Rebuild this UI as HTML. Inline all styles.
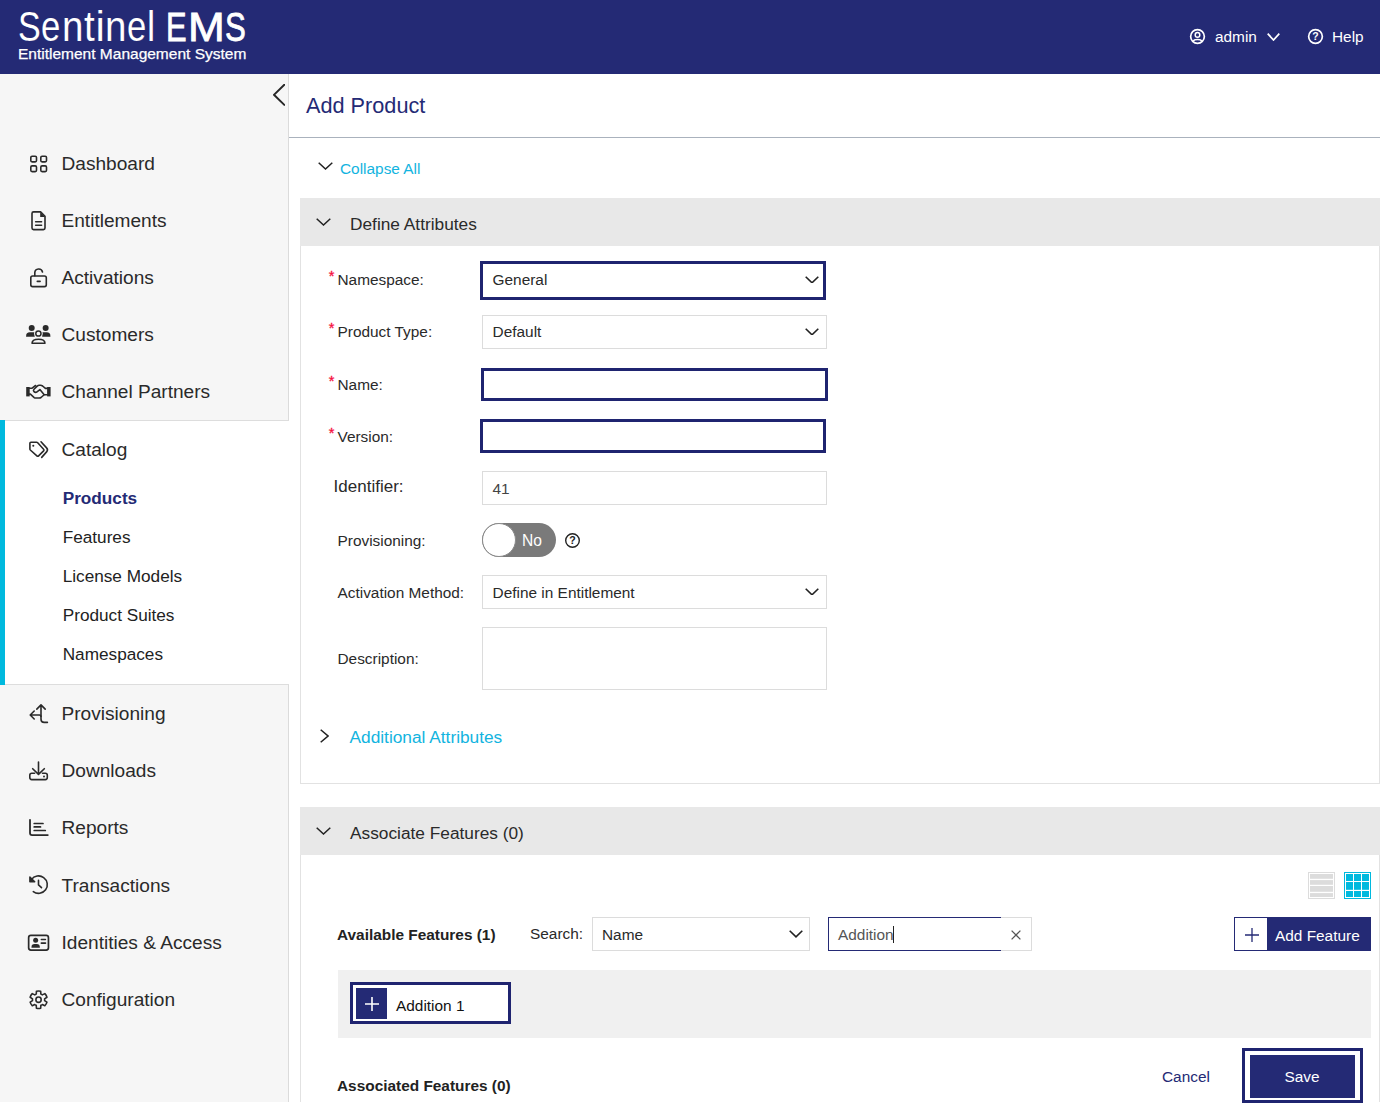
<!DOCTYPE html>
<html><head><meta charset="utf-8"><title>Sentinel EMS</title>
<style>
html,body{margin:0;padding:0;background:#fff;}
body{width:1380px;height:1108px;position:relative;overflow:hidden;font-family:"Liberation Sans",sans-serif;}
.t{position:absolute;white-space:pre;line-height:1;font-family:"Liberation Sans",sans-serif;}
.b{position:absolute;display:block;}
</style></head><body>
<div class="b" style="left:0px;top:0px;width:1380px;height:74px;background:#242a75"></div>
<div class="logo" aria-label="Sentinel EMS"><span class="t" style="left:17.88px;top:6px;font-size:42px;color:#fff;transform-origin:0 0;transform:scaleX(0.812);-webkit-text-stroke:0.12px #242a75">S</span><span class="t" style="left:41.35px;top:6px;font-size:42px;color:#fff;transform-origin:0 0;transform:scaleX(0.825);-webkit-text-stroke:0.12px #242a75">e</span><span class="t" style="left:61.75px;top:6px;font-size:42px;color:#fff;transform-origin:0 0;transform:scaleX(0.917);-webkit-text-stroke:0.12px #242a75">n</span><span class="t" style="left:84.0px;top:6px;font-size:42px;color:#fff;transform-origin:0 0;transform:scaleX(0.917);-webkit-text-stroke:0.12px #242a75">t</span><span class="t" style="left:95.6px;top:6px;font-size:42px;color:#fff;transform-origin:0 0;transform:scaleX(1.0);-webkit-text-stroke:0.12px #242a75">i</span><span class="t" style="left:104.75px;top:6px;font-size:42px;color:#fff;transform-origin:0 0;transform:scaleX(0.917);-webkit-text-stroke:0.12px #242a75">n</span><span class="t" style="left:126.85px;top:6px;font-size:42px;color:#fff;transform-origin:0 0;transform:scaleX(0.825);-webkit-text-stroke:0.12px #242a75">e</span><span class="t" style="left:146.88px;top:6px;font-size:42px;color:#fff;transform-origin:0 0;transform:scaleX(0.875);-webkit-text-stroke:0.12px #242a75">l</span><span class="t" style="left:155px;top:6px;font-size:42px;color:#fff"> </span><span class="t" style="left:165.96px;top:6.9px;font-size:40px;color:#fff;transform-origin:0 0;transform:scaleX(0.771);-webkit-text-stroke:0.8px #fff">E</span><span class="t" style="left:187.79px;top:6.9px;font-size:40px;color:#fff;transform-origin:0 0;transform:scaleX(1.103);-webkit-text-stroke:0.8px #fff">M</span><span class="t" style="left:225.22px;top:6.9px;font-size:40px;color:#fff;transform-origin:0 0;transform:scaleX(0.78);-webkit-text-stroke:0.8px #fff">S</span></div>
<span class="t" id="logo2" style="left:18px;top:45.6px;font-size:15.1px;color:#fff;transform-origin:0 0;transform:scaleX(1.027);-webkit-text-stroke:0.25px #fff">Entitlement Management System</span>
<span class="t" style="left:1215px;top:29.00px;font-size:15.4px;color:#fff;font-weight:400;">admin</span>
<span class="t" style="left:1332px;top:29.00px;font-size:15.4px;color:#fff;font-weight:400;">Help</span>
<svg class="b" style="left:1189.4px;top:28px;" width="17" height="17" viewBox="0 0 17 17" fill="none"><circle cx="8.5" cy="8.5" r="6.85" stroke="#fff" stroke-width="1.7"/><circle cx="8.5" cy="6.9" r="2.3" stroke="#fff" stroke-width="1.5"/><path d="M4.2 13.3 C5.2 10.9 11.8 10.9 12.8 13.3" stroke="#fff" stroke-width="1.5"/></svg>
<svg class="b" style="left:1267px;top:33px;" width="13" height="8" viewBox="0 0 13 8" fill="none"><path d="M0.7 0.7 L6.5 7 L12.3 0.7" stroke="#fff" stroke-width="1.7"/></svg>
<svg class="b" style="left:1306.9px;top:28px;" width="17" height="17" viewBox="0 0 17 17" fill="none"><circle cx="8.5" cy="8.5" r="6.85" stroke="#fff" stroke-width="1.7"/><text x="8.5" y="12.3" text-anchor="middle" font-family="Liberation Sans" font-weight="700" font-size="10.5" fill="#fff">?</text></svg>
<div class="b" style="left:0px;top:74px;width:288px;height:1034px;background:#f6f6f6"></div>
<div class="b" style="left:288px;top:74px;width:1px;height:1034px;background:#dbdbdb"></div>
<svg class="b" style="left:273px;top:84px;" width="12" height="21.6" viewBox="0 0 12 21.6" fill="none"><path d="M11.3 0.7 L1 10.8 L11.3 20.900000000000002" stroke="#262626" stroke-width="1.9" stroke-linecap="round"/></svg>
<div class="b" style="left:0px;top:420px;width:289px;height:265px;background:#fff;border-top:1px solid #dddddd;border-bottom:1px solid #dddddd;box-sizing:border-box"></div>
<div class="b" style="left:0px;top:420px;width:5px;height:265px;background:#00b9de"></div>
<span class="t" style="left:61.5px;top:154.00px;font-size:19.1px;color:#2a2a2a;font-weight:400;">Dashboard</span>
<span class="t" style="left:61.5px;top:211.00px;font-size:19.1px;color:#2a2a2a;font-weight:400;">Entitlements</span>
<span class="t" style="left:61.5px;top:268.00px;font-size:19.1px;color:#2a2a2a;font-weight:400;">Activations</span>
<span class="t" style="left:61.5px;top:325.00px;font-size:19.1px;color:#2a2a2a;font-weight:400;">Customers</span>
<span class="t" style="left:61.5px;top:382.00px;font-size:19.1px;color:#2a2a2a;font-weight:400;">Channel Partners</span>
<span class="t" style="left:61.5px;top:440.00px;font-size:19.1px;color:#2a2a2a;font-weight:400;">Catalog</span>
<span class="t" style="left:61.5px;top:704.00px;font-size:19.1px;color:#2a2a2a;font-weight:400;">Provisioning</span>
<span class="t" style="left:61.5px;top:761.00px;font-size:19.1px;color:#2a2a2a;font-weight:400;">Downloads</span>
<span class="t" style="left:61.5px;top:818.00px;font-size:19.1px;color:#2a2a2a;font-weight:400;">Reports</span>
<span class="t" style="left:61.5px;top:876.00px;font-size:19.1px;color:#2a2a2a;font-weight:400;">Transactions</span>
<span class="t" style="left:61.5px;top:933.00px;font-size:19.1px;color:#2a2a2a;font-weight:400;">Identities &amp; Access</span>
<span class="t" style="left:61.5px;top:990.00px;font-size:19.1px;color:#2a2a2a;font-weight:400;">Configuration</span>
<span class="t" style="left:62.7px;top:490.00px;font-size:17.2px;color:#242a75;font-weight:700;">Products</span>
<span class="t" style="left:62.7px;top:529.00px;font-size:17.2px;color:#222;font-weight:400;">Features</span>
<span class="t" style="left:62.7px;top:568.00px;font-size:17.2px;color:#222;font-weight:400;">License Models</span>
<span class="t" style="left:62.7px;top:607.00px;font-size:17.2px;color:#222;font-weight:400;">Product Suites</span>
<span class="t" style="left:62.7px;top:646.00px;font-size:17.2px;color:#222;font-weight:400;">Namespaces</span>
<svg class="b" style="left:0;top:0" width="290" height="1108" viewBox="0 0 290 1108"><rect x="30.8" y="156.20000000000002" width="5.7" height="5.7" rx="1.3" stroke="#2a2a2a" fill="none" stroke-linecap="round" stroke-linejoin="round" stroke-width="1.6"/><rect x="40.8" y="156.20000000000002" width="5.7" height="5.7" rx="1.3" stroke="#2a2a2a" fill="none" stroke-linecap="round" stroke-linejoin="round" stroke-width="1.6"/><rect x="30.8" y="165.9" width="5.7" height="5.7" rx="1.3" stroke="#2a2a2a" fill="none" stroke-linecap="round" stroke-linejoin="round" stroke-width="1.6"/><rect x="40.8" y="165.9" width="5.7" height="5.7" rx="1.3" stroke="#2a2a2a" fill="none" stroke-linecap="round" stroke-linejoin="round" stroke-width="1.6"/><path d="M32 213.5 a1.6 1.6 0 0 1 1.6 -1.6 H40.6 L45 216.2 V228 a1.6 1.6 0 0 1 -1.6 1.6 H33.6 a1.6 1.6 0 0 1 -1.6 -1.6 Z" stroke="#2a2a2a" fill="none" stroke-linecap="round" stroke-linejoin="round" stroke-width="1.6"/><path d="M40.2 211.9 V217 H45.2 Z" fill="#2a2a2a"/><path d="M35.6 221.7 H41.6 M35.6 225.3 H41.6" stroke="#2a2a2a" fill="none" stroke-linecap="round" stroke-linejoin="round" stroke-width="1.5"/><rect x="30.8" y="276" width="15.5" height="10.6" rx="1.8" stroke="#2a2a2a" fill="none" stroke-linecap="round" stroke-linejoin="round" stroke-width="1.6"/><path d="M34.8 275.8 V272.6 a3.9 3.9 0 0 1 7.7 -0.6" stroke="#2a2a2a" fill="none" stroke-linecap="round" stroke-linejoin="round" stroke-width="1.6"/><path d="M37.3 281.4 H40.1" stroke="#2a2a2a" fill="none" stroke-linecap="round" stroke-linejoin="round" stroke-width="1.6"/><circle cx="31.7" cy="328.1" r="3" fill="#2a2a2a"/><circle cx="45.65" cy="328.1" r="3" fill="#2a2a2a"/><path d="M26.1 336.8 V336 a3.7 3.7 0 0 1 3.7 -3.7 H34.7 V336.8 Z" fill="#2a2a2a"/><path d="M50.4 336.8 V336 a3.7 3.7 0 0 0 -3.7 -3.7 H42.2 V336.8 Z" fill="#2a2a2a"/><circle cx="38.4" cy="333.5" r="4.25" fill="#f6f6f6"/><circle cx="38.4" cy="333.5" r="2.6" stroke="#2a2a2a" fill="none" stroke-linecap="round" stroke-linejoin="round" stroke-width="1.5"/><path d="M32 343.3 C32 340.4 34.6 339.2 38.5 339.2 C42.4 339.2 45 340.4 45 343.3 Z" stroke="#2a2a2a" fill="none" stroke-linecap="round" stroke-linejoin="round" stroke-width="1.5"/><rect x="26.2" y="387" width="3.5" height="9.4" fill="#2a2a2a"/><rect x="47.1" y="387" width="3.5" height="9.4" fill="#2a2a2a"/><path d="M29.5 388.3 H31.8 L35.6 385.5" stroke="#2a2a2a" fill="none" stroke-linecap="round" stroke-linejoin="round" stroke-width="1.6"/><path d="M47.3 388.4 H45.4 L42.6 386 Q41.6 385.3 40.5 385.3 H39.2 Q38.1 385.3 37.2 386.1 L34 389.2 Q32.9 390.5 34 391.7 Q35.5 393 37 391.8 L39.9 389.6 L44.2 394.7 H47.3" stroke="#2a2a2a" fill="none" stroke-linecap="round" stroke-linejoin="round" stroke-width="1.6"/><path d="M29.5 394.1 H30.4 L34.2 397.6 Q34.8 398 35.6 398 H39.3 Q40.3 398 41 397.5 L43.9 395" stroke="#2a2a2a" fill="none" stroke-linecap="round" stroke-linejoin="round" stroke-width="1.6"/><path d="M29.9 443.3 a1 1 0 0 1 1 -1 H36.6 a1.6 1.6 0 0 1 1.1 0.45 L43.6 449.2 a1.2 1.2 0 0 1 0 1.7 L38.6 455.9 a1.2 1.2 0 0 1 -1.7 0 L30.3 450 a1.4 1.4 0 0 1 -0.4 -1 Z" stroke="#2a2a2a" fill="none" stroke-linecap="round" stroke-linejoin="round" stroke-width="1.6"/><circle cx="33.3" cy="445.8" r="1.05" fill="#2a2a2a"/><path d="M41 441.8 L46.6 447.9 a3 3 0 0 1 0 4 L41.7 457.4" stroke="#2a2a2a" fill="none" stroke-linecap="round" stroke-linejoin="round" stroke-width="1.6"/><path d="M36.8 709.1 L41 704.9 L45.2 709.1 M41 705 V719.2 a3.2 3.2 0 0 0 3.2 3.2 H47.4" stroke="#2a2a2a" fill="none" stroke-linecap="round" stroke-linejoin="round" stroke-width="1.6"/><path d="M34.2 711 L30.2 715 L34.2 719 M30.3 715 H39.5 a1.6 1.6 0 0 1 1.5 1.3" stroke="#2a2a2a" fill="none" stroke-linecap="round" stroke-linejoin="round" stroke-width="1.6"/><path d="M38.5 762 V774.2 M32.7 768.7 L38.5 774.4 L44.3 768.7" stroke="#2a2a2a" fill="none" stroke-linecap="round" stroke-linejoin="round" stroke-width="1.6"/><path d="M34.6 773.3 H31.8 a2 2 0 0 0 -2 2 V777.6 a2 2 0 0 0 2 2 H45.3 a2 2 0 0 0 2 -2 V775.3 a2 2 0 0 0 -2 -2 H42.5" stroke="#2a2a2a" fill="none" stroke-linecap="round" stroke-linejoin="round" stroke-width="1.6"/><circle cx="44" cy="776.5" r="0.95" fill="#2a2a2a"/><path d="M30 819.8 V833 a2.1 2.1 0 0 0 2.1 2.1 H47.8" stroke="#2a2a2a" fill="none" stroke-linecap="round" stroke-linejoin="round" stroke-width="1.8"/><path d="M34.2 823.5 H43 M34.2 826.9 H40.5 M34.2 830.5 H45.3" stroke="#2a2a2a" fill="none" stroke-linecap="round" stroke-linejoin="round" stroke-width="1.7"/><path d="M33.28 891.64 A8.75 8.75 0 1 0 31.38 879.63" stroke="#2a2a2a" fill="none" stroke-linecap="round" stroke-linejoin="round" stroke-width="1.6"/><path d="M29.9 877 V881.8 H34.7 Z" fill="#2a2a2a" stroke="#2a2a2a" stroke-width="1.5" stroke-linejoin="round"/><path d="M38.5 880.4 V884.9 L41.5 887.6" stroke="#2a2a2a" fill="none" stroke-linecap="round" stroke-linejoin="round" stroke-width="1.6"/><rect x="28.65" y="935.4" width="19.8" height="14.65" rx="2.3" stroke="#2a2a2a" fill="none" stroke-linecap="round" stroke-linejoin="round" stroke-width="1.7"/><circle cx="35.65" cy="940.35" r="2.5" fill="#2a2a2a"/><path d="M31.45 947.7 V947.3 a3.2 3.2 0 0 1 3.2 -3.2 H36.65 a3.2 3.2 0 0 1 3.2 3.2 V947.7 Z" fill="#2a2a2a"/><path d="M41.3 939.5 H45.5" stroke="#2a2a2a" fill="none" stroke-linecap="round" stroke-linejoin="round" stroke-width="1.4"/><path d="M41.4 943.1 H45.4" stroke="#2a2a2a" fill="none" stroke-linecap="round" stroke-linejoin="round" stroke-width="1.8"/><path d="M36.26 994.04 L36.43 991.21 A8.75 8.75 0 0 1 40.67 991.21 L40.84 994.04 A6.1 6.1 0 0 1 42.31 994.89 L44.84 993.62 A8.75 8.75 0 0 1 46.96 997.29 L44.59 998.85 A6.1 6.1 0 0 1 44.59 1000.55 L46.96 1002.11 A8.75 8.75 0 0 1 44.84 1005.78 L42.31 1004.51 A6.1 6.1 0 0 1 40.84 1005.36 L40.67 1008.19 A8.75 8.75 0 0 1 36.43 1008.19 L36.26 1005.36 A6.1 6.1 0 0 1 34.79 1004.51 L32.26 1005.78 A8.75 8.75 0 0 1 30.14 1002.11 L32.51 1000.55 A6.1 6.1 0 0 1 32.51 998.85 L30.14 997.29 A8.75 8.75 0 0 1 32.26 993.62 L34.79 994.89 A6.1 6.1 0 0 1 36.26 994.04 Z" stroke="#2a2a2a" fill="none" stroke-linecap="round" stroke-linejoin="round" stroke-width="1.6"/><circle cx="38.55" cy="999.7" r="2.65" stroke="#2a2a2a" fill="none" stroke-linecap="round" stroke-linejoin="round" stroke-width="1.6"/></svg>
<span class="t" style="left:306px;top:95.00px;font-size:21.7px;color:#242a75;font-weight:400;">Add Product</span>
<div class="b" style="left:289px;top:137px;width:1091px;height:1px;background:#aab2bd"></div>
<svg class="b" style="left:318px;top:162px;" width="15" height="8" viewBox="0 0 15 8" fill="none"><path d="M0.7 0.7 L7.5 7 L14.3 0.7" stroke="#222" stroke-width="1.5"/></svg>
<span class="t" style="left:340px;top:161.00px;font-size:15.4px;color:#12b4e0;font-weight:400;">Collapse All</span>
<div class="b" style="left:300px;top:198px;width:1080px;height:586px;border:1px solid #e2e2e2;box-sizing:border-box;background:#fff"></div>
<div class="b" style="left:300px;top:198px;width:1080px;height:48px;background:#e8e8e8"></div>
<svg class="b" style="left:316px;top:218px;" width="15" height="8" viewBox="0 0 15 8" fill="none"><path d="M0.7 0.7 L7.5 7 L14.3 0.7" stroke="#222" stroke-width="1.5"/></svg>
<span class="t" style="left:350px;top:216.00px;font-size:17.3px;color:#2a2a2a;font-weight:400;">Define Attributes</span>
<span class="t" style="left:328.8px;top:269.00px;font-size:14.6px;color:#f5103f;font-weight:400;-webkit-text-stroke:0.3px #f5103f">*</span>
<span class="t" style="left:337.5px;top:272.00px;font-size:15.4px;color:#2a2a2a;font-weight:400;">Namespace:</span>
<div class="b" style="left:480px;top:261px;width:346px;height:39px;border:3px solid #1f2470;box-sizing:border-box;background:#fff"></div>
<span class="t" style="left:492.6px;top:272.00px;font-size:15.4px;color:#2a2a2a;font-weight:400;">General</span>
<svg class="b" style="left:805px;top:275.6px;" width="14" height="7.8" viewBox="0 0 14 7.8" fill="none"><path d="M0.7 0.7 L7.0 6.8 L13.3 0.7" stroke="#222" stroke-width="1.6"/></svg>
<span class="t" style="left:328.8px;top:321.00px;font-size:14.6px;color:#f5103f;font-weight:400;-webkit-text-stroke:0.3px #f5103f">*</span>
<span class="t" style="left:337.5px;top:324.00px;font-size:15.4px;color:#2a2a2a;font-weight:400;">Product Type:</span>
<div class="b" style="left:482px;top:315px;width:345px;height:34px;border:1px solid #dcdcdc;box-sizing:border-box;background:#fff"></div>
<span class="t" style="left:492.6px;top:324.00px;font-size:15.4px;color:#2a2a2a;font-weight:400;">Default</span>
<svg class="b" style="left:805px;top:327.6px;" width="14" height="7.8" viewBox="0 0 14 7.8" fill="none"><path d="M0.7 0.7 L7.0 6.8 L13.3 0.7" stroke="#222" stroke-width="1.6"/></svg>
<span class="t" style="left:328.8px;top:374.00px;font-size:14.6px;color:#f5103f;font-weight:400;-webkit-text-stroke:0.3px #f5103f">*</span>
<span class="t" style="left:337.5px;top:377.00px;font-size:15.4px;color:#2a2a2a;font-weight:400;">Name:</span>
<div class="b" style="left:481px;top:368px;width:347px;height:33px;border:3px solid #1f2470;box-sizing:border-box;background:#fff"></div>
<span class="t" style="left:328.8px;top:426.00px;font-size:14.6px;color:#f5103f;font-weight:400;-webkit-text-stroke:0.3px #f5103f">*</span>
<span class="t" style="left:337.5px;top:429.00px;font-size:15.4px;color:#2a2a2a;font-weight:400;">Version:</span>
<div class="b" style="left:480px;top:419px;width:346px;height:34px;border:3px solid #1f2470;box-sizing:border-box;background:#fff"></div>
<span class="t" style="left:333.6px;top:478.00px;font-size:17px;color:#2a2a2a;font-weight:400;">Identifier:</span>
<div class="b" style="left:482px;top:471px;width:345px;height:34px;border:1px solid #dcdcdc;box-sizing:border-box;background:#fff"></div>
<span class="t" style="left:492.4px;top:481.00px;font-size:15.4px;color:#444;font-weight:400;">41</span>
<span class="t" style="left:337.5px;top:533.00px;font-size:15.4px;color:#2a2a2a;font-weight:400;">Provisioning:</span>
<div class="b" style="left:482px;top:523px;width:74px;height:34px;background:#7a7a7a;border-radius:17px"></div>
<div class="b" style="left:482px;top:523px;width:34px;height:34px;background:#fff;border:1px solid #8a8a8a;box-sizing:border-box;border-radius:17px"></div>
<span class="t" style="left:522px;top:533.00px;font-size:15.6px;color:#fff;font-weight:400;">No</span>
<svg class="b" style="left:564px;top:532px;" width="17" height="17" viewBox="0 0 17 17" fill="none"><circle cx="8.5" cy="8.5" r="6.8" stroke="#222" stroke-width="1.4"/><text x="8.5" y="12.1" text-anchor="middle" font-family="Liberation Sans" font-weight="700" font-size="10.6" fill="#222">?</text></svg>
<span class="t" style="left:337.5px;top:585.00px;font-size:15.4px;color:#2a2a2a;font-weight:400;">Activation Method:</span>
<div class="b" style="left:482px;top:575px;width:345px;height:34px;border:1px solid #dcdcdc;box-sizing:border-box;background:#fff"></div>
<span class="t" style="left:492.6px;top:585.00px;font-size:15.4px;color:#2a2a2a;font-weight:400;">Define in Entitlement</span>
<svg class="b" style="left:805px;top:587.6px;" width="14" height="7.8" viewBox="0 0 14 7.8" fill="none"><path d="M0.7 0.7 L7.0 6.8 L13.3 0.7" stroke="#222" stroke-width="1.6"/></svg>
<span class="t" style="left:337.5px;top:651.00px;font-size:15.4px;color:#2a2a2a;font-weight:400;">Description:</span>
<div class="b" style="left:482px;top:627px;width:345px;height:63px;border:1px solid #dcdcdc;box-sizing:border-box;background:#fff"></div>
<svg class="b" style="left:320px;top:728.5px;" width="9" height="14" viewBox="0 0 9 14" fill="none"><path d="M0.7 0.7 L8 7.0 L0.7 13.3" stroke="#222" stroke-width="1.5"/></svg>
<span class="t" style="left:349.5px;top:729.00px;font-size:17.3px;color:#12b4e0;font-weight:400;">Additional Attributes</span>
<div class="b" style="left:300px;top:807px;width:1080px;height:320px;border:1px solid #e2e2e2;box-sizing:border-box;background:#fff"></div>
<div class="b" style="left:300px;top:807px;width:1080px;height:48px;background:#e8e8e8"></div>
<svg class="b" style="left:316px;top:827px;" width="15" height="8" viewBox="0 0 15 8" fill="none"><path d="M0.7 0.7 L7.5 7 L14.3 0.7" stroke="#222" stroke-width="1.5"/></svg>
<span class="t" style="left:350px;top:825.00px;font-size:17.3px;color:#2a2a2a;font-weight:400;">Associate Features (0)</span>
<svg class="b" style="left:1308px;top:872px;" width="27" height="27" viewBox="0 0 27 27" fill="none"><rect x="0.5" y="0.5" width="26" height="26" fill="#fff" stroke="#dcdcdc"/><rect x="2" y="2" width="23" height="4.8" fill="#dcdcdc"/><rect x="2" y="8.1" width="23" height="4.7" fill="#dcdcdc"/><rect x="2" y="14" width="23" height="5.8" fill="#dcdcdc"/><rect x="2" y="21.1" width="23" height="3.9" fill="#dcdcdc"/></svg>
<svg class="b" style="left:1344px;top:872px;" width="27" height="27" viewBox="0 0 27 27" fill="none"><rect x="0.5" y="0.5" width="26" height="26" fill="#fff" stroke="#00b9de"/><g fill="#00b9de"><rect x="2" y="2" width="7" height="7"/><rect x="10" y="2" width="7" height="7"/><rect x="18" y="2" width="7" height="7"/><rect x="2" y="10" width="7" height="7.8"/><rect x="10" y="10" width="7" height="7.8"/><rect x="18" y="10" width="7" height="7.8"/><rect x="2" y="19" width="7" height="6"/><rect x="10" y="19" width="7" height="6"/><rect x="18" y="19" width="7" height="6"/></g></svg>
<span class="t" style="left:337px;top:927.00px;font-size:15.4px;color:#222;font-weight:700;">Available Features (1)</span>
<span class="t" style="left:530px;top:926.00px;font-size:15.4px;color:#2a2a2a;font-weight:400;">Search:</span>
<div class="b" style="left:592px;top:917px;width:218px;height:34px;border:1px solid #dcdcdc;box-sizing:border-box;background:#fff"></div>
<span class="t" style="left:602px;top:927.00px;font-size:15.4px;color:#2a2a2a;font-weight:400;">Name</span>
<svg class="b" style="left:788.5px;top:929.8px;" width="14" height="7.8" viewBox="0 0 14 7.8" fill="none"><path d="M0.7 0.7 L7.0 6.8 L13.3 0.7" stroke="#222" stroke-width="1.6"/></svg>
<div class="b" style="left:828px;top:917px;width:173px;height:34px;border:1px solid #242a75;border-right:none;box-sizing:border-box;background:#fff"></div>
<div class="b" style="left:1001px;top:917px;width:31px;height:34px;border:1px solid #dcdcdc;border-left:none;box-sizing:border-box;background:#fff"></div>
<span class="t" style="left:838px;top:927.00px;font-size:15.4px;color:#555;font-weight:400;">Addition</span>
<div class="b" style="left:893px;top:926px;width:1px;height:17px;background:#222"></div>
<svg class="b" style="left:1010.7px;top:929.6px;" width="10" height="10" viewBox="0 0 10 10" fill="none"><path d="M0.6 0.6 L9.4 9.4 M9.4 0.6 L0.6 9.4" stroke="#555" stroke-width="1.3"/></svg>
<div class="b" style="left:1234px;top:917px;width:137px;height:34px;background:#242a75"></div>
<div class="b" style="left:1234px;top:917px;width:34px;height:34px;background:#fff;border:1px solid #242a75;box-sizing:border-box"></div>
<svg class="b" style="left:1244.5px;top:927.5px;" width="14" height="14" viewBox="0 0 14 14" fill="none"><path d="M7 0 V14 M0 7 H14" stroke="#242a75" stroke-width="1.3"/></svg>
<span class="t" style="left:1275px;top:928.00px;font-size:15.4px;color:#fff;font-weight:400;">Add Feature</span>
<div class="b" style="left:338px;top:970px;width:1033px;height:68px;background:#f0f0f0"></div>
<div class="b" style="left:350px;top:982px;width:161px;height:42px;border:3px solid #1f2470;box-sizing:border-box;background:#fff"></div>
<div class="b" style="left:356px;top:988px;width:31px;height:31px;background:#242a75"></div>
<svg class="b" style="left:364.5px;top:996.8px;" width="14" height="14" viewBox="0 0 14 14" fill="none"><path d="M7 0 V14 M0 7 H14" stroke="#fff" stroke-width="1.6"/></svg>
<span class="t" style="left:396px;top:998.00px;font-size:15.4px;color:#111;font-weight:400;">Addition 1</span>
<span class="t" style="left:337px;top:1078.00px;font-size:15.4px;color:#222;font-weight:700;">Associated Features (0)</span>
<div class="b" style="left:0px;top:1102px;width:1380px;height:6px;background:#fff"></div>
<span class="t" style="left:1162px;top:1069.00px;font-size:15.4px;color:#242a75;font-weight:400;">Cancel</span>
<div class="b" style="left:1242px;top:1048px;width:121px;height:55px;border:3px solid #1f2470;box-sizing:border-box;background:#fff"></div>
<div class="b" style="left:1250px;top:1055px;width:105px;height:43px;background:#242a75"></div>
<span class="t" style="left:1284.5px;top:1069.00px;font-size:15.4px;color:#fff;font-weight:400;">Save</span>
</body></html>
